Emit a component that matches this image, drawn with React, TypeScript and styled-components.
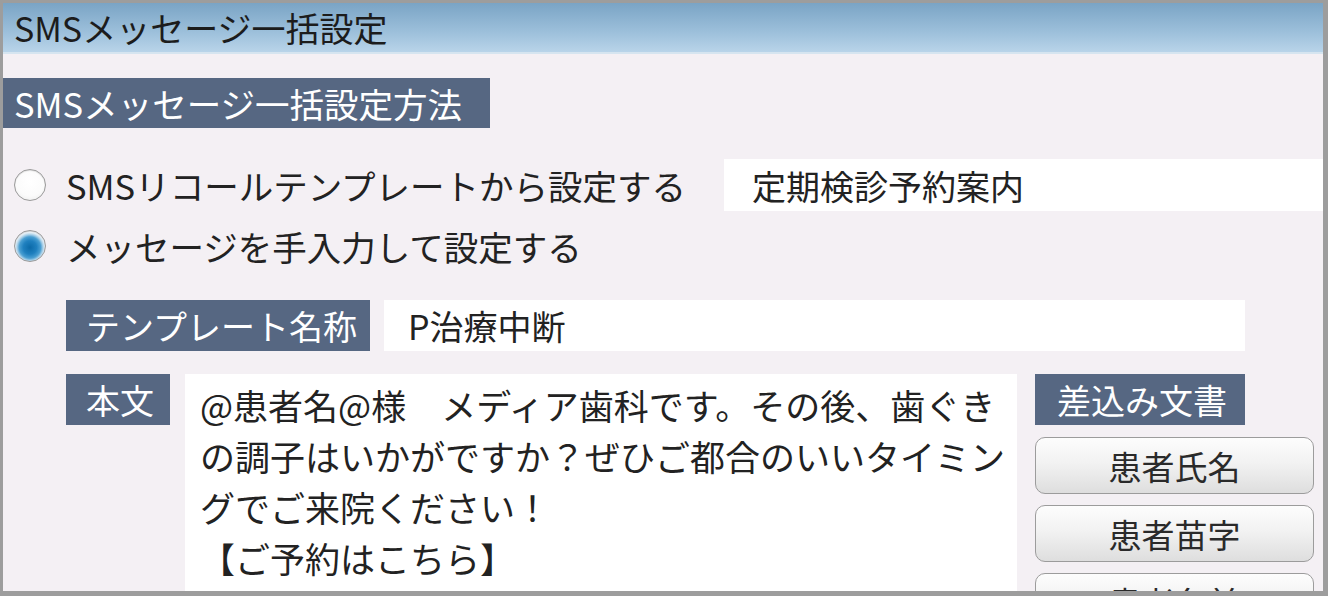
import React from "react";
import styled, { createGlobalStyle } from "styled-components";

const Global = createGlobalStyle`
  html, body { margin: 0; padding: 0; background: #ffffff; }
  body { font-family: "Noto Sans CJK JP", "Noto Sans", sans-serif; color: #222; }
  * { box-sizing: border-box; }
`;

const Frame = styled.div`
  width: 1328px;
  height: 596px;
  border: 3px solid #9d9d9d;
  border-right-width: 5px;
  border-bottom-width: 5px;
  background: #f4f0f4;
  display: flex;
  flex-direction: column;
  overflow: hidden;
`;

const Header = styled.div`
  height: 51px;
  flex: none;
  background: linear-gradient(to bottom, #7aa4c5 0%, #9dc0db 60%, #b9d4e9 100%);
  border-bottom: 2px solid #d6e5f0;
  padding-left: 11px;
  display: flex;
  align-items: center;
  font-size: 34px;
  color: #1c1c1c;
`;

const Content = styled.div`
  padding-top: 24px;
  display: flex;
  flex-direction: column;
`;

const SectionLabel = styled.div`
  width: 487px;
  height: 50px;
  background: #566782;
  color: #ffffff;
  font-size: 34.5px;
  line-height: 50px;
  padding-left: 11px;
  white-space: nowrap;
`;

const RadioGroup = styled.div`
  margin-top: 31px;
  display: flex;
  flex-direction: column;
  gap: 9px;
`;

const RadioRow = styled.div`
  height: 52px;
  display: flex;
  align-items: center;
  padding-left: 11px;
`;

const RadioDot = styled.span<{ $checked?: boolean }>`
  width: 32px;
  height: 32px;
  border-radius: 50%;
  flex: none;
  border: 1.5px solid #9a9a9a;
  background: ${(p) =>
    p.$checked
      ? "radial-gradient(circle at 50% 55%, #0b6aa8 0%, #1f80bf 30%, #4a9fd2 48%, #a9d0e8 58%, #eef5fa 68%, #f4f4f4 100%)"
      : "radial-gradient(circle at 50% 40%, #ffffff 0%, #fbfbfb 60%, #e6e6e6 100%)"};
  box-shadow: inset 0 1px 1px rgba(0, 0, 0, 0.12);
`;

const RadioText = styled.span<{ $width?: number }>`
  margin-left: 20px;
  font-size: 34.5px;
  color: #222;
  white-space: nowrap;
  width: ${(p) => (p.$width ? `${p.$width}px` : "auto")};
  flex: none;
`;

const FieldBox = styled.div<{ $pad?: number }>`
  background: #ffffff;
  height: 52px;
  display: flex;
  align-items: center;
  padding-left: ${(p) => p.$pad ?? 24}px;
  font-size: 34px;
  color: #222;
  white-space: nowrap;
`;

const GrowField = styled(FieldBox)`
  flex: 1;
`;

const Indented = styled.div`
  margin-left: 63px;
  margin-top: 28px;
  display: flex;
  flex-direction: column;
  gap: 23px;
`;

const Row = styled.div`
  display: flex;
  align-items: flex-start;
`;

const Tag = styled.div<{ $width: number; $pad?: number }>`
  width: ${(p) => p.$width}px;
  height: 51px;
  flex: none;
  background: #566782;
  color: #ffffff;
  font-size: 34px;
  line-height: 51px;
  padding-left: ${(p) => p.$pad ?? 20}px;
  white-space: nowrap;
`;

const NameField = styled(FieldBox)`
  margin-left: 14px;
  width: 861px;
  height: 51px;
`;

const BodyBox = styled.div`
  margin-left: 15px;
  width: 832px;
  height: 240px;
  flex: none;
  background: #ffffff;
  padding: 5px 0 0 15px;
  font-size: 35px;
  line-height: 51px;
  color: #222;
  white-space: pre;
  overflow: hidden;
`;

const SideColumn = styled.div`
  margin-left: 18px;
  width: 279px;
  display: flex;
  flex-direction: column;
`;

const InsertButton = styled.button`
  margin-top: 11px;
  height: 57px;
  width: 279px;
  border: 1.5px solid #9c9c9c;
  border-radius: 10px;
  background: linear-gradient(to bottom, #fdfdfd 0%, #f2f2f2 45%, #dedede 100%);
  font-family: "Noto Sans CJK JP", "Noto Sans", sans-serif;
  font-size: 33px;
  color: #2a2a2a;
  padding: 0;
  flex: none;
  display: flex;
  align-items: center;
  justify-content: center;
  &:first-of-type { margin-top: 12px; }
`;

const bodyText =
  "@患者名@様　メディア歯科です。その後、歯ぐき\nの調子はいかがですか？ぜひご都合のいいタイミン\nグでご来院ください！\n【ご予約はこちら】";

export default function App() {
  return (
    <>
      <Global />
      <Frame>
        <Header>SMSメッセージ一括設定</Header>
        <Content>
          <SectionLabel>SMSメッセージ一括設定方法</SectionLabel>
          <RadioGroup>
            <RadioRow>
              <RadioDot />
              <RadioText $width={658}>SMSリコールテンプレートから設定する</RadioText>
              <GrowField $pad={28}>定期検診予約案内</GrowField>
            </RadioRow>
            <RadioRow>
              <RadioDot $checked />
              <RadioText>メッセージを手入力して設定する</RadioText>
            </RadioRow>
          </RadioGroup>
          <Indented>
            <Row>
              <Tag $width={304}>テンプレート名称</Tag>
              <NameField>P治療中断</NameField>
            </Row>
            <Row>
              <Tag $width={104}>本文</Tag>
              <BodyBox>{bodyText}</BodyBox>
              <SideColumn>
                <Tag $width={210} $pad={22}>差込み文書</Tag>
                <InsertButton>患者氏名</InsertButton>
                <InsertButton>患者苗字</InsertButton>
                <InsertButton>患者名前</InsertButton>
              </SideColumn>
            </Row>
          </Indented>
        </Content>
      </Frame>
    </>
  );
}
